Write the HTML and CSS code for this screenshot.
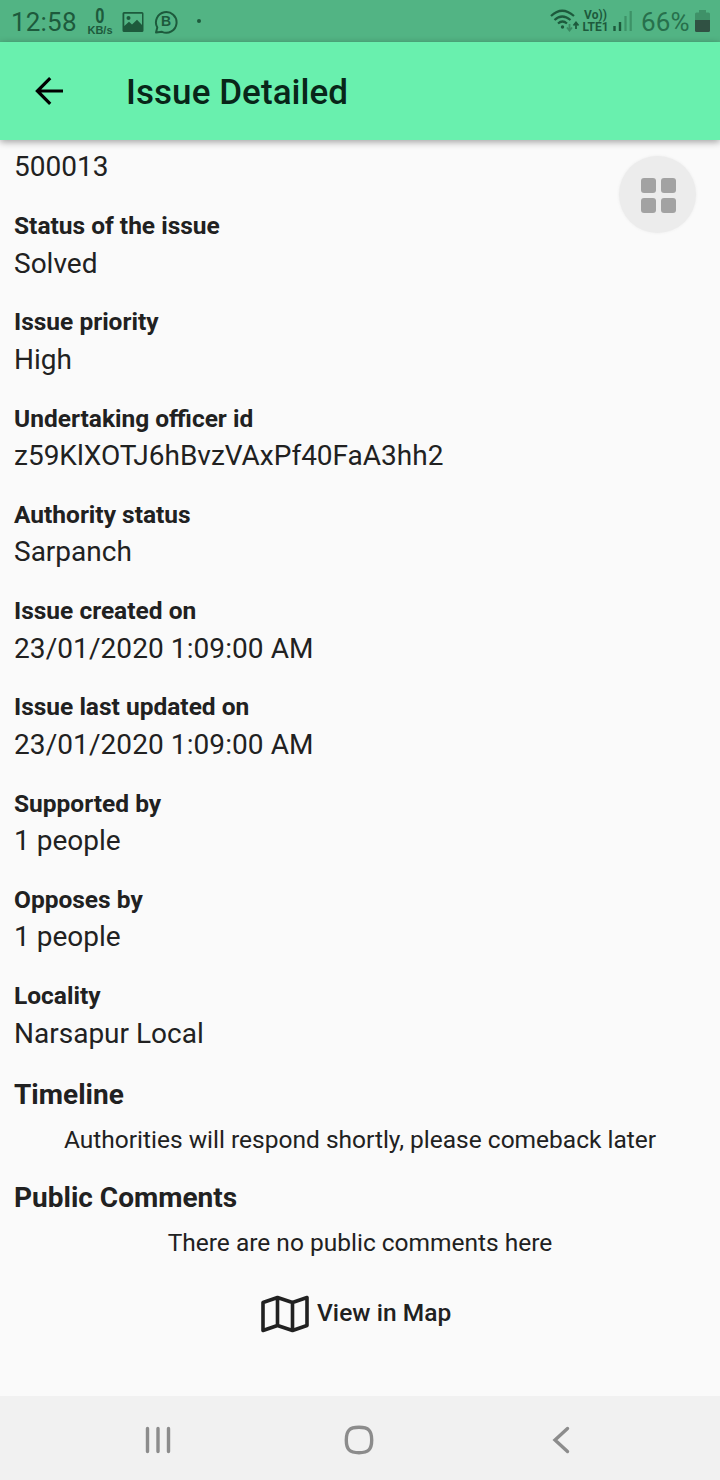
FILE: index.html
```html
<!DOCTYPE html>
<html lang="en">
<head>
<meta charset="utf-8">
<title>Issue Detailed</title>
<link rel="stylesheet" href="styles.css">
</head>
<body>
<div class="screen">
  <header class="status">
    <span class="clock">12:58</span>
    <span class="speed"><b>0</b><small>KB/s</small></span>
    <svg class="picture" width="22" height="20" viewBox="0 0 22 20"><path fill="currentColor" fill-rule="evenodd" d="M2 0h18q1.500 0 1.500 1.500v17q0 1.500-1.500 1.500H2Q.5 20 .5 18.500v-17Q.5 0 2 0ZM2.300 1.800V14l4.700-4.300 3 2.800 5-4.700 5 5.200V1.800Z"/><circle cx="6.500" cy="6" r="2" fill="currentColor"/></svg>
    <span class="chat">
      <svg width="24" height="24" viewBox="0 0 24 24"><path d="M3.300 17.500A10.300 10.300 0 1 1 8 21.800L2 22.500Z" fill="none" stroke="currentColor" stroke-width="2" stroke-linejoin="round"/></svg>
      <b>B</b>
    </span>
    <i class="dot"></i>
    <span class="spacer"></span>
    <svg class="wifi" width="30" height="24" viewBox="0 0 30 24"><g fill="none" stroke="currentColor" stroke-width="2.200"><path d="M1 7Q12-3.500 24 7M4.500 11Q12 4 20.500 11M8 14.500Q12.500 10.500 17 14.500"/></g><circle cx="12.500" cy="18" r="1.700" fill="currentColor"/><path d="M19.500 15v6M17 18.500l2.500 3 2.500-3" fill="none" stroke="#398960" stroke-width="1.800"/><path d="M26 20v-6M23.500 16.500l2.500-3 2.500 3" fill="none" stroke="currentColor" stroke-width="1.800"/></svg>
    <span class="lte"><span>Vo))</span><span>LTE1</span></span>
    <svg class="signal" width="19" height="20" viewBox="0 0 19 20"><path d="M1.500 15v5M7 11v9" stroke="currentColor" stroke-width="2.400"/><path d="M12.500 5v15M17.700 0v20" stroke="#3d9267" stroke-width="2.200"/></svg>
    <span class="percent">66%</span>
    <svg class="battery" width="15" height="22" viewBox="0 0 15 22"><path d="M4 0h7v2.500h2.500Q15 2.500 15 4v6H0V4Q0 2.500 1.500 2.500H4Z" fill="#3f9168"/><path d="M0 10h15v10.500q0 1.500-1.500 1.500h-12Q0 22 0 20.500Z" fill="#305143"/></svg>
  </header>
  <div class="appbar">
    <svg class="back" width="28" height="28" viewBox="0 0 28 28"><path d="M28 14H2M15.200 1.200 2.400 14l12.800 12.800" fill="none" stroke="#000" stroke-width="3.200"/></svg>
    <h1>Issue Detailed</h1>
  </div>
  <main class="content">
    <div class="value">500013</div>
    <section class="field"><h2>Status of the issue</h2><div class="value">Solved</div></section>
    <section class="field"><h2>Issue priority</h2><div class="value">High</div></section>
    <section class="field"><h2>Undertaking officer id</h2><div class="value">z59KlXOTJ6hBvzVAxPf40FaA3hh2</div></section>
    <section class="field"><h2>Authority status</h2><div class="value">Sarpanch</div></section>
    <section class="field"><h2>Issue created on</h2><div class="value date">23/01/2020 1:09:00 AM</div></section>
    <section class="field"><h2>Issue last updated on</h2><div class="value date">23/01/2020 1:09:00 AM</div></section>
    <section class="field"><h2>Supported by</h2><div class="value">1 people</div></section>
    <section class="field"><h2>Opposes by</h2><div class="value">1 people</div></section>
    <section class="field"><h2>Locality</h2><div class="value">Narsapur Local</div></section>
    <section class="group"><h3>Timeline</h3><p>Authorities will respond shortly, please comeback later</p></section>
    <section class="group"><h3>Public Comments</h3><p>There are no public comments here</p></section>
    <div class="map">
      <svg width="50" height="38" viewBox="0 0 50 38"><path d="M3 7.500 17.500 2.500 32.500 7.500 47 2.500V30.500L32.500 35.500 17.500 30.500 3 35.500ZM17.500 2.500v28M32.500 7.500v28" fill="none" stroke="#212121" stroke-width="3.600" stroke-linejoin="round"/></svg>
      <span>View in Map</span>
    </div>
  </main>
  <nav class="navbar">
    <svg width="28" height="28" viewBox="0 0 28 28"><path d="M3.500 2.500v23M14 2.500v23M24.500 2.500v23"/></svg>
    <svg width="30" height="30" viewBox="0 0 30 30"><path d="M15 2.300C24.500 2.300 27.700 5.500 27.700 15S24.500 27.700 15 27.700 2.300 24.500 2.300 15 5.500 2.300 15 2.300Z"/></svg>
    <svg width="20" height="28" viewBox="0 0 20 28"><path d="M16.500 2.500 4 14l12.500 11.500"/></svg>
  </nav>
  <div class="bubble"><i></i><i></i><i></i><i></i></div>
</div>
</body>
</html>
```
FILE: styles.css
```css
* { box-sizing: border-box; }
body { margin: 0; font-family: Roboto, sans-serif; color: #212121; }
h1, h2, h3, p { margin: 0; }
svg { display: block; flex: none; }

.screen {
  position: relative;
  width: 720px;
  height: 1480px;
  display: flex;
  flex-direction: column;
  background: #fafafa;
  overflow: hidden;
}

.status {
  flex: none;
  height: 42px;
  padding: 2px 10px 0 11px;
  display: flex;
  align-items: center;
  background: #52b484;
  color: #1d5a3c;
}
.clock { width: 76px; font-size: 26px; letter-spacing: .2px; }
.speed { width: 26px; display: flex; flex-direction: column; align-items: center; }
.speed b { font-size: 20px; line-height: 16px; transform: scaleX(.8); }
.speed small { font: bold 11px/12px "Liberation Sans", sans-serif; }
.picture { margin-left: 9px; }
.chat { position: relative; margin: -1px 0 0 10px; }
.chat b { position: absolute; inset: 0; text-align: center; font: bold 14px/23px "Liberation Sans", sans-serif; }
.dot { width: 4px; height: 4px; margin: -2px 0 0 19px; border-radius: 50%; background: currentColor; }
.spacer { flex: 1; }
.wifi { margin: -2px 2px 0 0; }
.lte { width: 27px; margin-top: -2px; display: flex; flex-direction: column; align-items: center; font: bold 12px/12px Roboto, sans-serif; white-space: nowrap; }
.signal { margin: -2px 9px 0 4px; }
.percent { width: 48px; margin-right: 6px; font-size: 26px; letter-spacing: .2px; color: #27704c; }
.battery { margin-top: -2px; }

.appbar {
  flex: none;
  position: relative;
  height: 98px;
  padding: 0 35px;
  display: flex;
  align-items: center;
  gap: 63px;
  background: #69f0ae;
  box-shadow: 0 2px 7px rgba(0, 0, 0, .36);
}
.appbar h1 { padding-top: 2px; font-size: 35px; font-weight: 500; letter-spacing: .06px; color: #082619; }

.content { flex: 1; padding: 10px 14px 0; }
.value { font-size: 28px; line-height: 33px; }
.date { letter-spacing: .08px; }
.field { padding-top: 27.700px; }
.field:nth-child(2) { padding-top: 28.200px; }
.field h2 { margin-bottom: 6.550px; font-size: 24.500px; line-height: 29px; font-weight: 700; }
.group { padding-top: 27.300px; }
.field + .group { padding-top: 28.500px; }
.group h3 { font-size: 28px; line-height: 33px; }
.group p { margin-top: 13.600px; font-size: 24.500px; line-height: 29px; text-align: center; }
.map { margin-top: 38px; display: flex; align-items: center; gap: 7px; padding-left: 246px; font-size: 24.500px; font-weight: 500; letter-spacing: .04px; }
.map span { margin-top: -2px; }

.navbar {
  flex: none;
  height: 84px;
  padding: 4px 149px 0 144px;
  display: grid;
  grid-template-columns: 200px 1fr 20px;
  align-items: center;
  background: #f1f1f1;
}
.navbar path { fill: none; stroke: #8c8c8c; stroke-width: 3.400; stroke-linecap: round; }

.bubble {
  position: absolute;
  top: 156px;
  left: 619px;
  width: 77px;
  height: 77px;
  padding: 1px 0 0 1px;
  display: grid;
  grid-template-columns: 15px 15px;
  grid-auto-rows: 15px;
  gap: 5px;
  place-content: center;
  border-radius: 50%;
  background: #ececec;
  box-shadow: 0 0 3px #ececec;
}
.bubble i { border-radius: 3px; background: #a2a2a2; }
```
